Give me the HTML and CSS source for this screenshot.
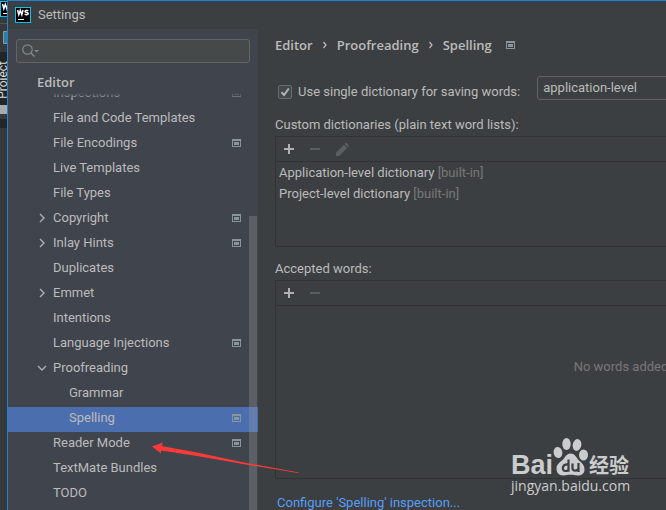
FILE: index.html
```html
<!DOCTYPE html>
<html lang="en">
<head>
<meta charset="utf-8">
<title>Settings</title>
<link rel="stylesheet" href="styles.css">
</head>
<body>
<svg class="defs" aria-hidden="true">
  <symbol id="scope" viewBox="0 0 9 8"><path fill="#88949e" fill-rule="evenodd" d="M0 0h9v8H0zM1 2v5h7V2z"/><path fill="#88949e" d="M2 3h5v3H2z"/></symbol>
  <symbol id="ws" viewBox="0 0 16 16"><path fill="#07c3f2" d="M0 0h16v16H0z"/><path fill="#000" d="M1 1h14v14H1z"/><path fill="none" stroke="#fff" stroke-width="1.5" d="M2.600 3l1.200 4.700L5.300 3.300l1.500 4.400L8 3M13.200 4c-.8-.8-3.200-1-3.200.4 0 1.300 3.300.7 3.300 2.200 0 1.500-2.600 1.300-3.600.4"/><path fill="#fff" d="M3 12h6v1H3z"/></symbol>
  <symbol id="right" viewBox="0 0 8 10"><path fill="none" stroke="#adb0b3" stroke-width="1.400" d="M2 1l4 4-4 4"/></symbol>
  <symbol id="down" viewBox="0 0 10 8"><path fill="none" stroke="#adb0b3" stroke-width="1.400" d="M1 2l4 4 4-4"/></symbol>
  <symbol id="plus" viewBox="0 0 10 10"><path fill="#afb1b3" d="M4 0h2v4h4v2H6v4H4V6H0V4h4z"/></symbol>
  <symbol id="minus" viewBox="0 0 10 10"><path fill="#5b5e60" d="M0 4h10v2H0z"/></symbol>
</svg>

<div class="screen">
  <aside class="backdrop">
    <svg class="back-logo"><use href="#ws"/></svg>
    <div class="back-bar"><span class="back-icon"></span></div>
    <div class="back-tool"><span>Project</span></div>
    <div class="back-fold"></div>
  </aside>

  <section class="window">
    <header class="titlebar">
      <svg class="logo"><use href="#ws"/></svg>
      <span>Settings</span>
    </header>
    <div class="panes">
      <nav class="sidebar" aria-label="Settings sections">
        <label class="search">
          <svg viewBox="0 0 18 14" aria-hidden="true"><circle cx="5.500" cy="5.500" r="4.700" fill="none" stroke="#7f898d" stroke-width="1.200"/><path d="M9 9l3.500 3.500" stroke="#7f898d" stroke-width="1.500"/><path d="M12 6h5l-2.500 2.500z" fill="#7f898d"/></svg>
          <input type="text" aria-label="Search settings">
        </label>
        <h2 class="group">Editor</h2>
        <div class="tree-view">
          <ul class="tree">
            <li><button>Inspections<svg class="scope"><use href="#scope"/></svg></button></li>
            <li><button>File and Code Templates</button></li>
            <li><button>File Encodings<svg class="scope"><use href="#scope"/></svg></button></li>
            <li><button>Live Templates</button></li>
            <li><button>File Types</button></li>
            <li><button class="branch"><svg class="arrow"><use href="#right"/></svg>Copyright<svg class="scope"><use href="#scope"/></svg></button></li>
            <li><button class="branch"><svg class="arrow"><use href="#right"/></svg>Inlay Hints<svg class="scope"><use href="#scope"/></svg></button></li>
            <li><button>Duplicates</button></li>
            <li><button class="branch"><svg class="arrow"><use href="#right"/></svg>Emmet</button></li>
            <li><button>Intentions</button></li>
            <li><button>Language Injections<svg class="scope"><use href="#scope"/></svg></button></li>
            <li><button class="branch"><svg class="arrow"><use href="#down"/></svg>Proofreading</button>
              <ul class="subtree">
                <li><button>Grammar</button></li>
                <li><button class="selected">Spelling<svg class="scope"><use href="#scope"/></svg></button></li>
              </ul>
            </li>
            <li><button>Reader Mode<svg class="scope"><use href="#scope"/></svg></button></li>
            <li><button>TextMate Bundles</button></li>
            <li><button>TODO</button></li>
          </ul>
          <div class="fade"></div>
          <div class="scrollbar"></div>
        </div>
      </nav>

      <main class="content">
        <h1 class="crumbs">
          <span>Editor</span><svg class="sep" viewBox="0 0 4 8"><path d="M.5 1L3 4 .5 7" fill="none" stroke="#bbb" stroke-width="1.200"/></svg>
          <span>Proofreading</span><svg class="sep" viewBox="0 0 4 8"><path d="M.5 1L3 4 .5 7" fill="none" stroke="#bbb" stroke-width="1.200"/></svg>
          <span>Spelling</span><svg class="crumb-scope"><use href="#scope"/></svg>
        </h1>
        <div class="option">
          <label class="check">
            <span class="box"><input type="checkbox" checked><svg viewBox="0 0 14 14" aria-hidden="true"><path d="M3.500 7.200l2.600 2.800L10.800 3.500" fill="none" stroke="#b4b6b8" stroke-width="2"/></svg></span>
            Use single dictionary for saving words:
          </label>
          <select aria-label="Dictionary"><option>application-level</option></select>
        </div>

        <h3 class="caption">Custom dictionaries (plain text word lists):</h3>
        <section class="list dictionaries">
          <div class="toolbar">
            <button aria-label="Add dictionary"><svg><use href="#plus"/></svg></button>
            <button aria-label="Remove dictionary" disabled><svg><use href="#minus"/></svg></button>
            <button aria-label="Edit dictionary" disabled><svg class="pencil" viewBox="0 0 14 14"><path fill="#5b5e60" d="M0 10.500L8.500 2 12 5.500 3.500 14H0zM9.300 1.200L10.500 0Q11-.3 11.700.3L13.700 2.300Q14.200 3 13.700 3.500L12.700 4.600z"/></svg></button>
          </div>
          <ul class="rows">
            <li>Application-level dictionary <span>[built-in]</span></li>
            <li>Project-level dictionary <span>[built-in]</span></li>
          </ul>
        </section>

        <h3 class="caption">Accepted words:</h3>
        <section class="list words">
          <div class="toolbar">
            <button aria-label="Add word"><svg><use href="#plus"/></svg></button>
            <button aria-label="Remove word" disabled><svg><use href="#minus"/></svg></button>
          </div>
          <p class="empty">No words added</p>
        </section>
        <a class="configure" href="#">Configure 'Spelling' inspection...</a>
      </main>
    </div>
  </section>

  <svg class="pointer" viewBox="0 0 148 34" aria-hidden="true"><path fill="#fb3b39" d="M0 5.500L11 1.500 9.500 5 45 11.500 92 21.500 147 31.500 146 32 91 23 45 15 9 9.500 9 12.500z"/></svg>

  <div class="watermark">
    <div class="brand">
      <span class="bai">Bai</span>
      <svg class="paw" viewBox="0 0 36 38" aria-hidden="true"><g fill="#cbcccd"><ellipse cx="5" cy="14.500" rx="4.300" ry="5.500" transform="rotate(-12 5 14.500)"/><ellipse cx="13.500" cy="6" rx="4.200" ry="6"/><ellipse cx="24" cy="7" rx="4.300" ry="6" transform="rotate(12 24 7)"/><ellipse cx="30.500" cy="17" rx="4.500" ry="5.500"/><path d="M17.500 15.500c5 0 6 5 9 7.500 3 2.500 5 4.500 5 8.500 0 4-3 6-7 6-3 0-4-.7-7-.7s-4 .7-7 .7c-5 0-7-3-7-7 0-4 3-6 6-8.500 3-2.500 3.500-6.500 8-6.500z"/></g><g fill="none" stroke="#3c3f41" stroke-width="2.200"><path d="M15.500 21.500v12.200M15.500 26.500c-7-.8-7 6.500-3 6.500 2 0 3-.8 3-2M19.500 25.500v4.500c0 3.500 5.500 3.500 6 0v-4.500M25.500 25v9"/></g></svg>
      <span class="cn">经验</span>
    </div>
    <div class="site">jingyan.baidu.com</div>
  </div>
</div>
</body>
</html>
```

FILE: styles.css
```css
* { box-sizing: border-box; }

body {
  margin: 0;
  background: #3c3f41;
  color: #bbbbbb;
  font: 13px/20px Roboto, "Noto Sans", "Noto Sans CJK SC", sans-serif;
}

button, input, select { font: inherit; color: inherit; }
ul { list-style: none; margin: 0; padding: 0; }
h1, h2, h3, p { margin: 0; font-size: inherit; }
svg { display: block; flex: none; }
.defs { position: absolute; width: 0; height: 0; }

.screen {
  position: relative;
  display: flex;
  height: 100vh;
  overflow: hidden;
}

/* Editor window behind the dialog */
.backdrop {
  flex: none;
  width: 7px;
  overflow: hidden;
  background: #38393a;
}
.back-logo { width: 16px; height: 16px; margin: 1px 0 6px; }
.back-bar { height: 29px; padding-top: 7px; border-top: 1px solid #555; }
.back-icon { display: block; width: 8px; height: 13px; margin-left: 3px; background: #337f99; border: 1px solid #8a9498; }
.back-tool { height: 53px; background: #242526; color: #d8d8d8; padding-top: 9px; }
.back-tool span { display: block; writing-mode: vertical-rl; transform: rotate(180deg); font-size: 12px; line-height: 14px; margin-left: -4px; }
.back-fold { height: 9px; background: #a8aaab; box-shadow: 0 14px #242526; }

.window {
  flex: 1;
  min-width: 0;
  display: flex;
  flex-direction: column;
  border: solid #1c83d8;
  border-width: 1px 0 0 1px;
}
.titlebar {
  display: flex;
  align-items: center;
  gap: 7px;
  height: 28px;
  padding: 0 7px;
}
.logo { width: 16px; height: 16px; }
.panes { flex: 1; min-height: 0; display: flex; }

/* Sidebar */
.sidebar {
  flex: none;
  display: flex;
  flex-direction: column;
  width: 250px;
  padding-top: 10px;
  background: #40444d;
}
.search {
  display: flex;
  align-items: center;
  height: 24px;
  margin: 0 8px;
  padding-left: 5px;
  border: 1px solid #646464;
  border-radius: 3px;
  background: #45494a;
}
.search svg { width: 18px; height: 14px; }
.search input { flex: 1; min-width: 0; border: 0; outline: 0; background: none; }
.group { margin: 9px 0 1px 29px; font: 600 13px/20px "Open Sans", sans-serif; }
.tree-view { position: relative; flex: 1; min-height: 0; overflow: hidden; }
.tree { margin-top: -11px; }
.tree button {
  display: flex;
  align-items: center;
  width: 100%;
  height: 25px;
  padding: 0 17px 3px 45px;
  border: 0;
  background: none;
  text-align: left;
}
.tree .branch { padding-left: 29px; }
.tree .subtree button { padding-left: 61px; }
.tree .selected { background: #4b6eaf; }
.arrow { width: 10px; height: 10px; margin-right: 6px; }
.scope { width: 9px; height: 8px; margin-left: auto; }
.fade {
  position: absolute;
  inset: 0 0 auto;
  height: 6px;
  background: linear-gradient(#40444d, transparent);
}
.scrollbar {
  position: absolute;
  top: 123px;
  right: 1px;
  bottom: 0;
  width: 8px;
  background: rgba(166, 166, 166, .28);
}

/* Settings page */
.content { flex: 1; min-width: 709px; padding: 5px 0 0 17px; }
.crumbs { display: flex; align-items: center; gap: 10px; font: 600 13px/22px "Open Sans", sans-serif; }
.sep { width: 4px; height: 8px; }
.crumb-scope { width: 9px; height: 8px; margin-left: 4px; }
.option { display: flex; align-items: center; gap: 17px; height: 24px; margin: 20px 0 15px; }
.check { display: flex; align-items: center; gap: 6px; padding: 8px 0 0 3px; height: 24px; }
.box { position: relative; width: 14px; height: 14px; }
.box input {
  display: block;
  appearance: none;
  width: 14px;
  height: 14px;
  margin: 0;
  border: 1px solid #6b6b6b;
  border-radius: 2px;
  background: #43494a;
}
.box svg { position: absolute; inset: 0; }
.option select {
  flex: 1;
  height: 24px;
  padding: 0 5px;
  appearance: none;
  border: 1px solid #646464;
  border-radius: 3px;
  background: #3c3f41;
}
.caption { font-weight: normal; line-height: 20px; margin-bottom: 1px; }
.list { border: 1px solid #323232; }
.toolbar { display: flex; align-items: center; gap: 16px; height: 25px; padding-left: 8px; border-bottom: 1px solid #323232; }
.toolbar button { padding: 0; border: 0; background: none; }
.toolbar svg { width: 10px; height: 10px; }
.toolbar .pencil { width: 13px; height: 13px; }
.dictionaries { height: 111px; margin-bottom: 12px; }
.rows { padding: 0 3px; }
.rows li { line-height: 21px; }
.rows span { color: #787878; }
.words { height: 199px; }
.empty { padding-top: 51px; text-align: center; color: #787878; }
.configure { display: block; width: max-content; margin: 14px 0 0 2px; color: #589df6; text-decoration: none; }

/* Overlays */
.pointer { position: absolute; left: 152px; top: 441px; width: 148px; height: 34px; }
.watermark { position: absolute; left: 511px; top: 438px; color: #cbcccd; }
.brand { display: flex; align-items: flex-end; height: 38px; }
.bai { font: bold 27px/30px "Liberation Sans", sans-serif; height: 26px; }
.paw { width: 36px; height: 38px; }
.cn { font: bold 20px/24px "Noto Sans CJK SC", sans-serif; height: 23px; }
.site { font: 14px/20px "Open Sans", sans-serif; }
```
